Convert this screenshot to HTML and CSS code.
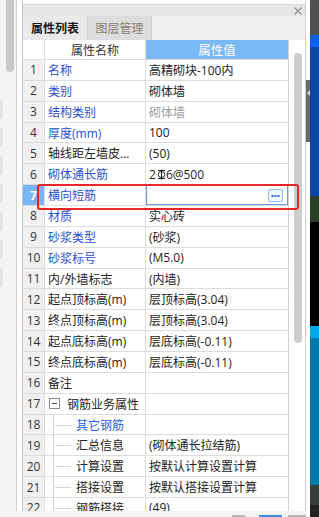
FILE: index.html
```html
<!DOCTYPE html>
<html lang="zh">
<head>
<meta charset="utf-8">
<title>属性列表</title>
<link rel="stylesheet" href="styles.css">
</head>
<body>
<div class="app">
  <div class="main">
    <div class="lstrip">
      <div class="lscroll">
        <div class="thumb"></div>
        <div class="litems">
          <div class="litem"></div><div class="litem"></div><div class="litem"></div><div class="litem"></div><div class="litem"></div><div class="litem"></div><div class="litem"></div>
        </div>
      </div>
    </div>
    <div class="panel">
      <div class="ptop"></div>
      <div class="titlebar">
        <svg class="close" width="8" height="8" viewBox="0 0 8 8"><path d="M0.5 0.5L7.5 7.5M7.5 0.5L0.5 7.5" stroke="#8f8f8f" stroke-width="1.2"/></svg>
      </div>
      <div class="tabs">
        <div class="tab active">属性列表</div>
        <div class="tab">图层管理</div>
      </div>
      <div class="pbody">
        <div class="table">
          <div class="row head">
            <div class="c num"></div>
            <div class="c name center">属性名称</div>
            <div class="c val hv">属性值</div>
          </div>
          <div class="row"><div class="c num">1</div><div class="c name blue">名称</div><div class="c val">高精砌块-100内</div></div>
          <div class="row"><div class="c num">2</div><div class="c name blue">类别</div><div class="c val">砌体墙</div></div>
          <div class="row"><div class="c num">3</div><div class="c name blue">结构类别</div><div class="c val grey">砌体墙</div></div>
          <div class="row"><div class="c num">4</div><div class="c name blue">厚度(mm)</div><div class="c val">100</div></div>
          <div class="row"><div class="c num">5</div><div class="c name">轴线距左墙皮...</div><div class="c val">(50)</div></div>
          <div class="row"><div class="c num">6</div><div class="c name blue">砌体通长筋</div><div class="c val">2<svg class="rebar" width="9" height="11" viewBox="0 0 9 11"><path d="M1 1.5H8M1 9.5H8M4.5 0.5V10.5" stroke="#222" stroke-width="1" fill="none"/><ellipse cx="4.5" cy="5.5" rx="3.3" ry="3" stroke="#222" stroke-width="1" fill="none"/></svg>6@500</div></div>
          <div class="row sel"><div class="c num">7</div><div class="c name blue">横向短筋</div><div class="c val"><div class="edit"><span class="dots"><svg width="13" height="11" viewBox="0 0 13 11"><rect x="2.5" y="5" width="2" height="2" fill="#2f77cc"/><rect x="5.5" y="5" width="2" height="2" fill="#2f77cc"/><rect x="8.5" y="5" width="2" height="2" fill="#2f77cc"/></svg></span></div></div></div>
          <div class="row"><div class="c num">8</div><div class="c name blue">材质</div><div class="c val">实心砖</div></div>
          <div class="row"><div class="c num">9</div><div class="c name blue">砂浆类型</div><div class="c val">(砂浆)</div></div>
          <div class="row"><div class="c num">10</div><div class="c name blue">砂浆标号</div><div class="c val">(M5.0)</div></div>
          <div class="row"><div class="c num">11</div><div class="c name">内/外墙标志</div><div class="c val">(内墙)</div></div>
          <div class="row"><div class="c num">12</div><div class="c name">起点顶标高(m)</div><div class="c val">层顶标高(3.04)</div></div>
          <div class="row"><div class="c num">13</div><div class="c name">终点顶标高(m)</div><div class="c val">层顶标高(3.04)</div></div>
          <div class="row"><div class="c num">14</div><div class="c name">起点底标高(m)</div><div class="c val">层底标高(-0.11)</div></div>
          <div class="row"><div class="c num">15</div><div class="c name">终点底标高(m)</div><div class="c val">层底标高(-0.11)</div></div>
          <div class="row"><div class="c num">16</div><div class="c name">备注</div><div class="c val"></div></div>
          <div class="row"><div class="c num">17</div><div class="c name"><span class="minus"></span><span class="grp">钢筋业务属性</span></div><div class="c val"></div></div>
          <div class="row"><div class="c num">18</div><div class="c name tree"><span class="branch"></span><span class="blue2">其它钢筋</span></div><div class="c val"></div></div>
          <div class="row"><div class="c num">19</div><div class="c name tree"><span class="branch"></span>汇总信息</div><div class="c val">(砌体通长拉结筋)</div></div>
          <div class="row"><div class="c num">20</div><div class="c name tree"><span class="branch"></span>计算设置</div><div class="c val">按默认计算设置计算</div></div>
          <div class="row"><div class="c num">21</div><div class="c name tree"><span class="branch"></span>搭接设置</div><div class="c val">按默认搭接设置计算</div></div>
          <div class="row"><div class="c num">22</div><div class="c name tree"><span class="branch"></span>钢筋搭接</div><div class="c val">(49)</div></div>
        </div>
        <div class="vscroll"><div class="vthumb"></div></div>
        <div class="redbox"></div>
      </div>
    </div>
  </div>
  <div class="bottom">
    <span class="bb g1"></span><span class="bb b1"></span><span class="bb g2"></span>
  </div>
</div>
<div class="desk">
  <div class="split"><div class="grip"><span class="arrow"></span></div></div>
  <div class="colors">
    <div class="k k1"></div><div class="k k2"></div><div class="k k3"></div><div class="k k4"></div><div class="k k5"></div><div class="k k6"></div><div class="k k7"></div><div class="k k8"></div><div class="k k9"></div>
  </div>
</div>
</body>
</html>
```
FILE: styles.css
```css
* { box-sizing: border-box; margin: 0; padding: 0; }
html, body { width: 319px; height: 517px; overflow: hidden; }
body {
  display: flex;
  font-family: "Open Sans", "Noto Sans CJK SC", sans-serif;
  font-size: 12px;
  color: #222;
  background: #f3f3f3;
}
.app { width: 306px; display: flex; flex-direction: column; }
.main { height: 511px; display: flex; }

.lstrip { width: 22px; display: flex; background: #fff; }
.lscroll { width: 17px; border-right: 1px solid #d0d0d0; background: #f4f4f4; display: flex; flex-direction: column; }
.thumb { margin-left: 6px; width: 8px; height: 72px; background: #c9c9c9; border-radius: 0 0 4px 4px; }
.litems { margin-top: 28px; display: flex; flex-direction: column; gap: 9px; }
.litem { width: 3px; height: 19px; background: #e4e4e4; }

.panel { width: 284px; border-left: 1px solid #c8c8c8; border-right: 1px solid #cfcfcf; display: flex; flex-direction: column; background: #fff; }
.ptop { height: 4px; background: #fbfbfb; }
.titlebar { height: 12px; background: #e6e6e6; border-top: 1px solid #d8d8d8; display: flex; justify-content: flex-end; align-items: center; padding-right: 3px; }
.tabs { height: 24px; background: #f0f0f0; display: flex; }
.tab { width: 64px; display: flex; align-items: center; justify-content: center; background: #dcdcdc; color: #8a8070; border-right: 1px solid #d2d2d2; }
.tab.active { width: 65px; background: #e9e9e9; color: #1a1a1a; font-weight: bold; }

.pbody { flex: 1; display: flex; min-height: 0; position: relative; }
.table { width: 266px; overflow: hidden; }
.row { display: grid; grid-template-columns: 22px 101px 143px; height: 20.87px; border-bottom: 1px solid #dcdcdc; }
.row.head { height: 20px; }
.c { display: flex; align-items: center; border-right: 1px solid #dcdcdc; white-space: nowrap; overflow: hidden; }
.c.val { border-right-color: #d2d2d2; padding-left: 3px; }
.c.name { padding-left: 3px; }
.c.num { justify-content: center; background: #f0f0f0; color: #333; font-size: 12px; }
.head .c.num { background: #fff; }
.c.center { justify-content: center; color: #333; padding-left: 0; }
.c.hv { background: #7ab8f6; color: #fff; justify-content: center; padding-left: 0; font-size: 12.5px; }
.blue { color: #2a4fd6; }
.blue2 { color: #1f5ff0; }
.grey { color: #9a9a9a; }
.rebar { margin: 0 0 0 1px; }

.row.sel .c.num { background: #78b5f5; color: #fff; font-weight: bold; }
.row.sel .c.val { padding: 0; }
.edit { flex: 1; align-self: stretch; border: 1px solid #5f9fe2; display: flex; align-items: center; justify-content: flex-end; padding-right: 4px; }
.dots { width: 15px; height: 13px; border: 1px solid #93bdea; border-radius: 2px; background: #eef5fd; display: flex; }

.minus { width: 11px; height: 11px; border: 1px solid #8a8a8a; margin-left: 1px; position: relative; flex: none; background: #fff; }
.minus::after { content: ""; position: absolute; left: 2px; right: 2px; top: 4px; height: 1px; background: #444; }
.grp { margin-left: 7px; }

.tree { align-self: stretch; }
.branch { align-self: stretch; width: 18px; margin-left: 5px; margin-right: 5px; border-left: 1px solid #d6d6d6; position: relative; flex: none; }
.branch::after { content: ""; position: absolute; left: 1px; right: 0; top: 50%; height: 1px; background: #d6d6d6; }

.redbox { position: absolute; left: 14px; top: 144px; width: 262px; height: 26px; border: 2px solid #e8262a; border-radius: 3px; }

.vscroll { width: 16px; background: #fff; padding-top: 13px; padding-left: 5px; }
.vthumb { width: 8px; height: 290px; background: #cdcdcd; border-radius: 4px; }

.bottom { height: 6px; background: #f3f3f3; display: flex; align-items: flex-end; }
.bb { height: 2px; display: block; }
.g1 { width: 14px; margin-left: 232px; background: #b8b8b8; }
.b1 { width: 26px; margin-left: 14px; background: #3a86e0; }
.g2 { width: 20px; margin-left: 6px; background: #b8b8b8; }

.desk { width: 13px; display: flex; }
.split { width: 4px; background: #fff; }
.grip { margin-top: 80px; height: 62px; background: #6a6a6a; display: flex; justify-content: center; padding-top: 10px; }
.arrow { width: 0; height: 0; border-top: 3px solid transparent; border-bottom: 3px solid transparent; border-right: 3px solid #d8d8d8; }
.colors { width: 9px; display: flex; flex-direction: column; }
.k1 { height: 35px; background: #505050; }
.k2 { height: 12px; background: #0b62ee; }
.k3 { height: 149px; background: #0b47a8; }
.k4 { height: 26px; background: #2d3f2a; }
.k5 { height: 104px; background: #000; }
.k6 { height: 12px; background: #00a6ee; }
.k7 { height: 147px; background: #0078a8; }
.k8 { height: 20px; background: #3a3e3a; }
.k9 { flex: 1; background: #222; }
```
